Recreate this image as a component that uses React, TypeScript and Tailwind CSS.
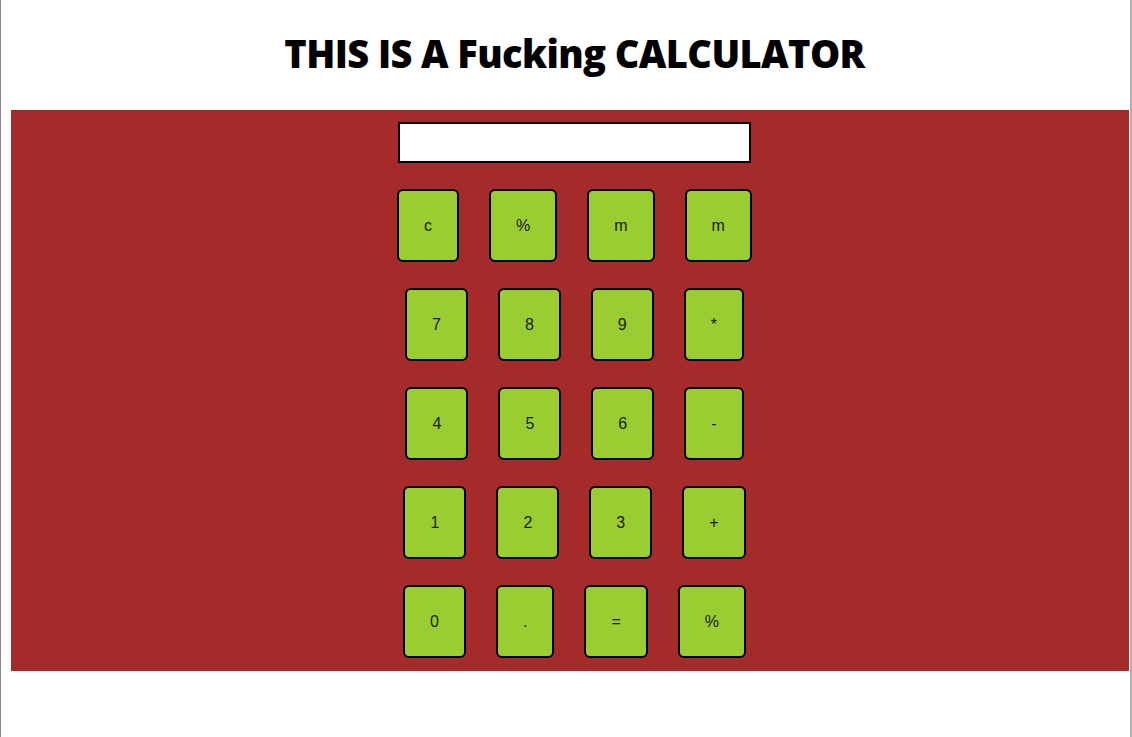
import React from "react";

const rows: string[][] = [
  ["c", "%", "m", "m"],
  ["7", "8", "9", "*"],
  ["4", "5", "6", "-"],
  ["1", "2", "3", "+"],
  ["0", ".", "=", "%"],
];

export default function App() {
  return (
    <div className="min-h-[737px] bg-white border-l border-r-2 border-l-[#8a8a8a] border-r-[#b0b0b0]">
      <div className="h-[110px] flex items-center justify-center pl-[18px] pb-[4px]">
        <h1 className="text-[38px] font-extrabold text-black tracking-[-0.6px] [font-family:'Open_Sans',sans-serif]">
          THIS IS A Fucking CALCULATOR
        </h1>
      </div>
      <div className="ml-[10px] mr-px bg-[#a52a2a] pt-[12px] pb-[13px] pl-[9px] flex flex-col items-center gap-[26px]">
        <div className="w-[353px] h-[41px] bg-white border-2 border-black" />
        {rows.map((row, i) => (
          <div key={i} className="flex gap-[30px]">
            {row.map((b, j) => (
              <button
                key={j}
                className="h-[73px] px-[25px] bg-[#9acd32] border-2 border-black rounded-[6px] text-[16px] text-[#1a1a1a] [font-family:'Liberation_Sans',Arial,sans-serif]"
              >
                {b}
              </button>
            ))}
          </div>
        ))}
      </div>
    </div>
  );
}
